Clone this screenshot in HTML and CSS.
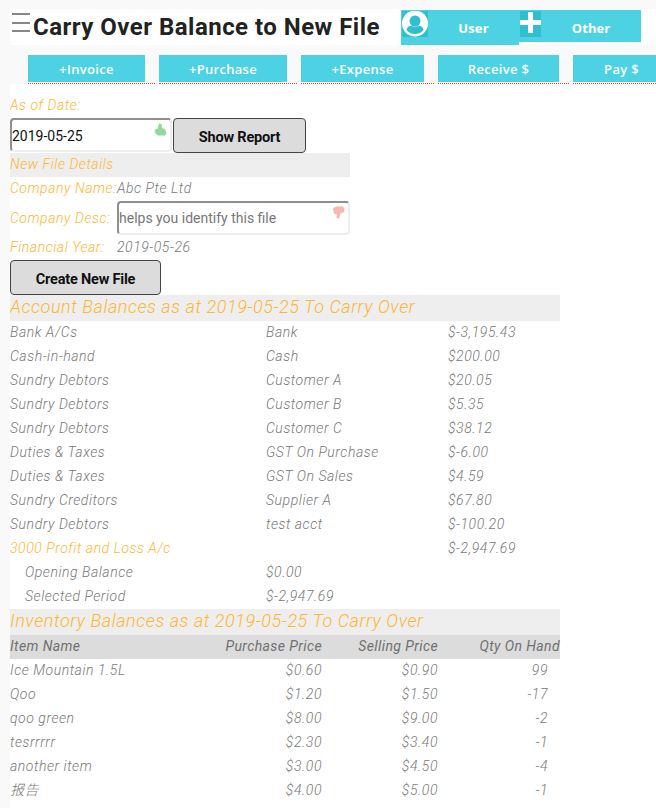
FILE: index.html
```html
<!DOCTYPE html>
<html lang="en">
<head>
<meta charset="utf-8">
<title>Carry Over Balance to New File</title>
<link rel="stylesheet" href="styles.css">
</head>
<body>
<header class="topbar">
  <div class="menu-icon"><span></span><span></span><span></span></div>
  <h1 class="title">Carry Over Balance to New File</h1>
  <a class="top-btn user">
    <svg class="tile" viewBox="0 0 26 26" width="26" height="26"><rect width="26" height="26" fill="#30bfd1"/><circle cx="13" cy="12.5" r="13" fill="#fff"/><circle cx="13" cy="10" r="5.5" fill="#30bfd1"/><path d="M4.500 19c.5-3 2.500-4 5-4.200 2 1.200 5 1.200 7 0 2.500.2 4.500 1.200 5 4.200-2 2.500-5 4-8.500 4s-6.500-1.500-8.500-4z" fill="#30bfd1"/></svg>
    <span>User</span>
  </a>
  <a class="top-btn other">
    <svg class="tile" viewBox="0 0 21 26" width="21" height="26"><rect width="21" height="26" fill="#30bfd1"/><path d="M8 1h5v8h8v5h-8v8H8v-8H0V9h8z" fill="#fff"/></svg>
    <span>Other</span>
  </a>
</header>
<nav class="actions">
  <a class="act w117">+Invoice</a>
  <a class="act w128">+Purchase</a>
  <a class="act w123">+Expense</a>
  <a class="act w121">Receive $</a>
  <a class="act w97">Pay $</a>
</nav>
<main class="content">
  <div class="label as-of">As of Date:</div>
  <div class="date-row">
    <div class="field date-field"><span class="field-text dark">2019-05-25</span><svg class="hint" viewBox="0 0 13 13" width="13" height="13"><path d="M.5 7 3.500 5.500 5 .5 7.500 1 8 5 11 6 12.500 10 11 12.500 4 12.500 1.500 10.500z" fill="#93d99e"/></svg></div>
    <button class="btn show">Show Report</button>
  </div>
  <div class="band small">New File Details</div>
  <div class="detail-row name-row"><span class="label key">Company Name:</span><span class="val">Abc Pte Ltd</span></div>
  <div class="detail-row desc-row">
    <span class="label key">Company Desc:</span>
    <div class="field desc-field"><span class="field-text">helps you identify this file</span><svg class="hint" viewBox="0 0 13 13" width="13" height="13"><path d="M1 2 5 .5 11 .5 12.500 3 12 6 8.500 7.500 7 12.500 4.500 12 5 8.500 2 7.500z" fill="#f9b5b0"/></svg></div>
  </div>
  <div class="detail-row year-row"><span class="label key">Financial Year:</span><span class="val">2019-05-26</span></div>
  <button class="btn create">Create New File</button>
  <div class="band big">Account Balances as at 2019-05-25 To Carry Over</div>
  <div class="acct">
    <div class="row"><span>Bank A/Cs</span><span>Bank</span><span>$-3,195.43</span></div>
    <div class="row"><span>Cash-in-hand</span><span>Cash</span><span>$200.00</span></div>
    <div class="row"><span>Sundry Debtors</span><span>Customer A</span><span>$20.05</span></div>
    <div class="row"><span>Sundry Debtors</span><span>Customer B</span><span>$5.35</span></div>
    <div class="row"><span>Sundry Debtors</span><span>Customer C</span><span>$38.12</span></div>
    <div class="row"><span>Duties &amp; Taxes</span><span>GST On Purchase</span><span>$-6.00</span></div>
    <div class="row"><span>Duties &amp; Taxes</span><span>GST On Sales</span><span>$4.59</span></div>
    <div class="row"><span>Sundry Creditors</span><span>Supplier A</span><span>$67.80</span></div>
    <div class="row"><span>Sundry Debtors</span><span>test acct</span><span>$-100.20</span></div>
    <div class="row"><span class="orange">3000 Profit and Loss A/c</span><span></span><span>$-2,947.69</span></div>
    <div class="row"><span class="indent">Opening Balance</span><span>$0.00</span><span></span></div>
    <div class="row"><span class="indent">Selected Period</span><span>$-2,947.69</span><span></span></div>
  </div>
  <div class="band big">Inventory Balances as at 2019-05-25 To Carry Over</div>
  <div class="inv inv-head"><span>Item Name</span><span>Purchase Price</span><span>Selling Price</span><span>Qty On Hand</span></div>
  <div class="inv"><span>Ice Mountain 1.5L</span><span>$0.60</span><span>$0.90</span><span class="qty">99</span></div>
  <div class="inv"><span>Qoo</span><span>$1.20</span><span>$1.50</span><span class="qty">-17</span></div>
  <div class="inv"><span>qoo green</span><span>$8.00</span><span>$9.00</span><span class="qty">-2</span></div>
  <div class="inv"><span>tesrrrrr</span><span>$2.30</span><span>$3.40</span><span class="qty">-1</span></div>
  <div class="inv"><span>another item</span><span>$3.00</span><span>$4.50</span><span class="qty">-4</span></div>
  <div class="inv"><span>报告</span><span>$4.00</span><span>$5.00</span><span class="qty">-1</span></div>
</main>
</body>
</html>
```
FILE: styles.css
```css
* { box-sizing: border-box; }
html, body { margin: 0; padding: 0; height: 808px; overflow: hidden; }
body { background: #f9f9f9; font-family: Roboto, "Noto Sans CJK SC", sans-serif; }
.topbar { display: flex; align-items: flex-start; margin: 9px 0 0 10px; padding-top: 1px; height: 36px; background: #fff; }
.menu-icon { width: 23px; padding-top: 3px; display: flex; flex-direction: column; gap: 6.500px; padding-left: 2px; }
.menu-icon span { display: block; width: 18px; height: 2px; background: #888; }
.title { margin: -1px 0 0; width: 368px; font: 700 24px/36px Roboto, sans-serif; letter-spacing: 0.48px; color: #222; white-space: nowrap; }
.top-btn { display: flex; background: #4dd2e4; color: #fff; font: 700 13px "Open Sans", sans-serif; }
.top-btn span { flex: 1; text-align: center; padding-top: 9px; letter-spacing: 0.1px; }
.tile { display: block; margin-top: 1px; flex: none; }
.user { width: 118px; height: 35px; }
.user .tile { margin-left: 1px; }
.other { width: 122px; height: 32px; }
.other .tile { margin-left: 1px; }
.actions { display: flex; height: 39px; padding: 10px 0 0 28px; gap: 14px; white-space: nowrap; overflow: hidden; }
.act { flex: none; height: 27px; position: relative; background: #4dd2e4; color: #fff; font: 600 13px/28px "Open Sans", sans-serif; letter-spacing: 0.3px; text-align: center; }
.act::after { content: ""; position: absolute; left: 0; right: -10px; bottom: -2px; border-bottom: 1px dotted #e5421e; }
.w117 { width: 117px; } .w128 { width: 128px; } .w123 { width: 123px; } .w121 { width: 121px; } .w97 { width: 97px; }
.content { margin-left: 10px; height: 724px; background: #fff; font: italic 300 14px/22px Roboto, "Noto Sans CJK SC", sans-serif; letter-spacing: 0.55px; color: #777; overflow: hidden; }
.label { color: #ffb52e; }
.as-of { line-height: 42px; height: 34px; }
.date-row { display: flex; align-items: flex-start; height: 34px; }
.field { position: relative; background: #fff; border: 2px solid #eee; border-top-color: #8f8f8f; border-left-color: #8f8f8f; border-radius: 4px; font: 400 14px/30px Roboto, sans-serif; letter-spacing: 0; }
.field-text { color: #777; }
.field-text.dark { color: #111; }
.date-field { line-height: 32px; }
.hint { position: absolute; right: 3px; top: 3px; }
.date-field { width: 162px; height: 34px; }
.desc-field { width: 233px; height: 34px; }
.btn { display: block; background: #dcdcdc; border: 1px solid #444; border-radius: 4px; padding: 3px 0 0; font: 700 14.500px Roboto, sans-serif; color: #111; letter-spacing: -0.2px; }
.show { width: 133px; height: 35px; margin-left: 1px; }
.create { width: 151px; height: 35px; }
.band { background: #eee; color: #ffb52e; white-space: nowrap; }
.band.small { width: 340px; height: 24px; margin-top: 1px; }
.band.big { width: 550px; font-size: 18px; height: 26px; line-height: 24px; letter-spacing: 0.55px; }
.detail-row { display: flex; align-items: center; }
.name-row { height: 24px; padding-bottom: 2px; }
.desc-row { height: 34px; }
.year-row { height: 25px; padding-bottom: 1px; }
.key { width: 107px; white-space: nowrap; }
.val { white-space: nowrap; }
.row { display: grid; grid-template-columns: 256px 182px 112px; width: 550px; height: 24px; white-space: nowrap; }
.orange { color: #ffb52e; }
.indent { padding-left: 15px; }
.inv { display: grid; grid-template-columns: 140px 172px 116px 122px; width: 550px; height: 24px; white-space: nowrap; }
.inv span + span { text-align: right; }
.inv .qty { padding-right: 12px; }
.inv-head { background: #dcdcdc; font-weight: 400; letter-spacing: 0.4px; color: #707070; }
```
